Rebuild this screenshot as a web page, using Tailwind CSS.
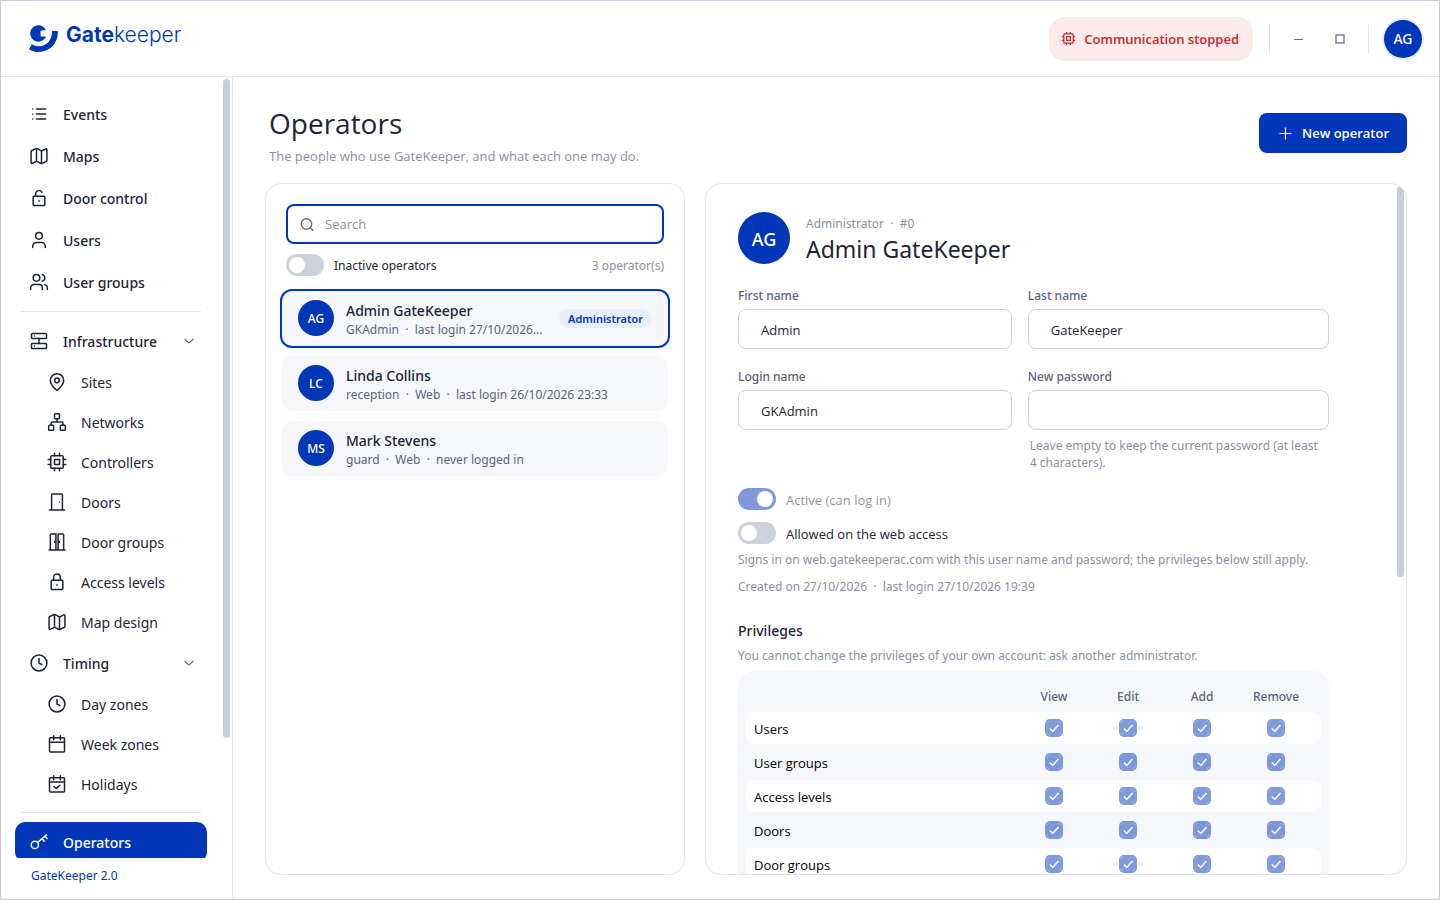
<!DOCTYPE html>
<html lang="en">
<head>
    <meta charset="UTF-8">
    <meta name="viewport" content="width=device-width, initial-scale=1.0">
    <title>GateKeeper - Operators</title>
    <script src="https://cdn.jsdelivr.net/npm/@tailwindcss/browser@4"></script>
</head>
<body class="h-screen overflow-hidden bg-white font-['Noto_Sans','Open_Sans',sans-serif] text-[13px] text-[#1f2436]">

    <!-- Icon set -->
    <svg class="hidden" xmlns="http://www.w3.org/2000/svg">
        <symbol id="i-list" viewBox="0 0 24 24"><path d="M9 6h11M9 12h11M9 18h11M4.500 6h.1M4.500 12h.1M4.500 18h.1"/></symbol>
        <symbol id="i-map" viewBox="0 0 24 24"><path d="M14.1 5.55a2 2 0 0 0 1.8 0l4.2-2.1A1 1 0 0 1 21.5 4.3v13.1a1 1 0 0 1-.55.9l-5.05 2.5a2 2 0 0 1-1.8 0l-4.2-2.1a2 2 0 0 0-1.8 0l-4.2 2.1A1 1 0 0 1 2.5 20V6.6a1 1 0 0 1 .55-.9L8.1 3.2a2 2 0 0 1 1.8 0zM15 5.8v15M9 3.2v15"/></symbol>
        <symbol id="i-unlock" viewBox="0 0 24 24"><rect x="5" y="10" width="14" height="11" rx="1"/><path d="M8 10V7a4 4 0 0 1 7.600-1.700M12 15.200v.8"/></symbol>
        <symbol id="i-lock" viewBox="0 0 24 24"><rect x="5" y="10" width="14" height="11" rx="1"/><path d="M8 10V6.500a4 4 0 0 1 8 0V10M12 15.200v.8"/></symbol>
        <symbol id="i-user" viewBox="0 0 24 24"><circle cx="12" cy="7" r="4"/><path d="M19.500 21v-1.500a4.500 4.500 0 0 0-4.500-4.500H9a4.500 4.500 0 0 0-4.500 4.500V21"/></symbol>
        <symbol id="i-users" viewBox="0 0 24 24"><circle cx="9" cy="7" r="4"/><path d="M16 21v-2a4 4 0 0 0-4-4H6a4 4 0 0 0-4 4v2M22 21v-2a4 4 0 0 0-3-3.870M16 3.130a4 4 0 0 1 0 7.750"/></symbol>
        <symbol id="i-server" viewBox="0 0 24 24"><rect x="3" y="3" width="18" height="6" rx="1"/><rect x="3" y="15" width="18" height="6" rx="1"/><path d="M6.500 6h.1M6.500 18h.1M12 9v6"/></symbol>
        <symbol id="i-pin" viewBox="0 0 24 24"><path d="M20 10c0 5-5.500 10.200-7.400 11.800a1 1 0 0 1-1.200 0C9.500 20.200 4 15 4 10a8 8 0 0 1 16 0"/><circle cx="12" cy="10" r="2.800"/></symbol>
        <symbol id="i-network" viewBox="0 0 24 24"><rect x="16" y="16" width="6" height="6" rx="1"/><rect x="2" y="16" width="6" height="6" rx="1"/><rect x="9" y="2" width="6" height="6" rx="1"/><path d="M5 16v-3a1 1 0 0 1 1-1h12a1 1 0 0 1 1 1v3M12 12V8"/></symbol>
        <symbol id="i-cpu" viewBox="0 0 24 24"><rect x="4.500" y="4.500" width="15" height="15" rx="1.500"/><rect x="9" y="9" width="6" height="6" rx=".5"/><path d="M9 1.500v3M15 1.500v3M9 19.500v3M15 19.500v3M1.500 9h3M1.500 15h3M19.500 9h3M19.500 15h3"/></symbol>
        <symbol id="i-door" viewBox="0 0 24 24"><path d="M5.500 21V3.500a1 1 0 0 1 1-1h11a1 1 0 0 1 1 1V21M3 21.500h18M15 12v.1"/></symbol>
        <symbol id="i-doors" viewBox="0 0 24 24"><path d="M4 21V3.500a1 1 0 0 1 1-1h5.700V21M13.300 21V2.500H19a1 1 0 0 1 1 1V21M2.500 21.500h19M9 11.500v.8M15 11.500v.8"/></symbol>
        <symbol id="i-clock" viewBox="0 0 24 24"><circle cx="12" cy="12" r="9.500"/><path d="M12 6.500V12l3.500 2"/></symbol>
        <symbol id="i-calendar" viewBox="0 0 24 24"><rect x="3" y="4.500" width="18" height="17" rx="1"/><path d="M8 2v5M16 2v5M3 10h18"/></symbol>
        <symbol id="i-calendar-check" viewBox="0 0 24 24"><rect x="3" y="4.500" width="18" height="17" rx="1"/><path d="M8 2v5M16 2v5M3 9.500h18M8.500 15l2.500 2.500 4.500-4"/></symbol>
        <symbol id="i-key" viewBox="0 0 24 24"><circle cx="7" cy="15.500" r="4.300"/><path d="M10.300 12.600L21 3.500M15.800 8l2.500 3M19.200 5l2.500 2.800"/></symbol>
        <symbol id="i-chevron" viewBox="0 0 24 24"><path d="M3 8l9 8 9-8"/></symbol>
    </svg>

    <div class="flex h-full flex-col border border-[#c9cddb]">

        <!-- Top bar -->
        <header class="flex h-[76px] shrink-0 items-center justify-between border-b border-[#e3e5ed] pr-[17px] pl-7">
            <a href="#" class="flex items-start gap-2 text-[#0037b8]">
                <svg class="h-7 w-[29px]" viewBox="0 0 29 28" fill="currentColor">
                    <path d="M17 5.300A8.200 8.200 0 1 0 17 11.600h-4a1.500 1.500 0 0 1-1.500-1.500v-3.300a1.500 1.500 0 0 1 1.500-1.500z"/>
                    <path d="M23 6h5.900c.4 12-7.600 21-19.100 21-3.700 0-6.900-.9-9.800-2.800l2.800-4.900c2.100 1.300 4.300 1.900 7 1.900 8.200 0 13.200-6.200 13.200-15.200z"/>
                </svg>
                <span class="font-[Inter] text-[21px] leading-5"><b class="font-bold">Gate</b><span class="font-light">keeper</span></span>
            </a>
            <div class="flex items-center">
                <div class="flex h-11 items-center gap-2 rounded-2xl bg-[#fcebeb] pr-[14px] pl-3 font-[Open_Sans] font-semibold text-[#c52828]">
                    <svg class="size-[15px] fill-none stroke-current stroke-2"><use href="#i-cpu"/></svg>
                    <span class="pt-[2px]">Communication stopped</span>
                </div>
                <div class="ml-4 h-[30px] w-px bg-[#e3e5ed]"></div>
                <button class="ml-[7px] flex h-8 w-[42px] items-center justify-center" aria-label="Minimize">
                    <svg class="size-3 fill-none stroke-[#686e82]" viewBox="0 0 12 12"><path d="M2 6.500h9"/></svg>
                </button>
                <button class="flex h-8 w-[42px] items-center justify-center" aria-label="Maximize">
                    <svg class="size-3 fill-none stroke-[#686e82]" viewBox="0 0 12 12"><rect x="2" y="2" width="8" height="8" stroke-width="1.300"/></svg>
                </button>
                <div class="ml-[7px] h-[30px] w-px bg-[#e3e5ed]"></div>
                <button class="ml-[15px] size-[38px] rounded-full bg-[#0037b8] pt-px text-sm font-medium text-white ring-2 ring-[#e8eefc]">AG</button>
            </div>
        </header>

        <div class="flex min-h-0 flex-1">

            <!-- Sidebar -->
            <aside class="flex w-[232px] shrink-0 flex-col border-r border-[#e3e5ed]">
                <div class="flex min-h-0 flex-1 justify-between">
                    <nav id="menu" class="ml-[14px] flex w-48 flex-col gap-[2px] overflow-hidden pt-[17px] text-sm"></nav>
                    <div class="mt-[2px] mr-[2px] h-[659px] w-[7px] rounded-full bg-[#c9cddb]"></div>
                </div>
                <a href="#" class="h-[41px] pl-[30px] text-xs leading-9 text-[#0037b8]">GateKeeper 2.0</a>
            </aside>

            <!-- Content -->
            <main class="flex min-w-0 flex-1 flex-col px-8 pb-6">
                <div class="flex h-[106px] shrink-0 items-start justify-between pt-[27px] font-[Open_Sans]">
                    <div class="pl-1">
                        <h1 class="text-[28px] leading-[38px]">Operators</h1>
                        <p class="leading-7 text-[#8b90a4]">The people who use GateKeeper, and what each one may do.</p>
                    </div>
                    <button class="mt-[9px] flex h-10 items-center gap-[10px] rounded-lg bg-[#0037b8] pr-[18px] pl-5 font-semibold text-white">
                        <svg class="size-[13px] fill-none stroke-current" viewBox="0 0 14 14"><path d="M7 .500v13M.500 7h13" stroke-width="1.300"/></svg>
                        <span class="pt-px">New operator</span>
                    </button>
                </div>

                <div class="flex min-h-0 flex-1 gap-5">

                    <!-- Operator list -->
                    <section class="w-[420px] shrink-0 rounded-2xl border border-[#e3e5ed] px-4 py-5">
                        <div class="px-1">
                            <label class="flex h-10 items-center gap-[10px] rounded-lg border-2 border-[#0037b8] px-3">
                                <svg class="size-[15px] shrink-0 fill-none stroke-[#686e82]" viewBox="0 0 15 15"><circle cx="6.500" cy="7" r="5.200" stroke-width="1.400"/><path d="M10.200 10.700l3 3" stroke-width="1.400"/></svg>
                                <input type="text" placeholder="Search" aria-label="Search" class="min-w-0 flex-1 pt-px font-[Open_Sans] outline-none placeholder:text-[#8b90a4]">
                            </label>
                            <div class="mt-[10px] flex h-[22px] items-center justify-between">
                                <label class="flex items-center gap-[10px] text-xs">
                                    <input type="checkbox" class="h-[22px] w-[38px] appearance-none rounded-full bg-[#cdd1dd] p-[3px] before:block before:size-4 before:rounded-full before:bg-white checked:bg-[#0037b8] checked:before:ml-4">
                                    <span class="pt-[2px]">Inactive operators</span>
                                </label>
                                <span class="pt-[2px] text-xs text-[#8b90a4]">3 operator(s)</span>
                            </div>
                        </div>
                        <div id="operators" class="mt-[15px] flex flex-col gap-[10px]"></div>
                    </section>

                    <!-- Operator card -->
                    <section class="flex min-w-0 flex-1 justify-between overflow-hidden rounded-2xl border border-[#e3e5ed]">
                        <div class="mr-[68px] ml-8 h-full min-w-0 flex-1 overflow-hidden pt-7">
                            <div class="flex h-[52px] items-center gap-4">
                                <div class="flex size-[52px] items-center justify-center rounded-full bg-[#0037b8] pt-px text-lg font-medium text-white">AG</div>
                                <div>
                                    <p class="text-xs leading-[22px] whitespace-pre text-[#8b90a4]">Administrator  ·  #0</p>
                                    <h2 class="text-[23px] leading-7">Admin GateKeeper</h2>
                                </div>
                            </div>

                            <form>
                                <div class="mt-[22px] grid grid-cols-[10fr_11fr] gap-x-4 gap-y-[18px]">
                                    <label class="flex flex-col gap-[3px] text-xs leading-5 font-medium text-[#5d647a]">First name
                                        <input type="text" value="Admin" class="h-10 w-full rounded-lg border border-[#cdd1e0] px-[22px] pt-px font-[Open_Sans] text-[13px] font-normal text-[#1f2436]">
                                    </label>
                                    <label class="flex flex-col gap-[3px] text-xs leading-5 font-medium text-[#5d647a]">Last name
                                        <input type="text" value="GateKeeper" class="h-10 w-full rounded-lg border border-[#cdd1e0] px-[22px] pt-px font-[Open_Sans] text-[13px] font-normal text-[#1f2436]">
                                    </label>
                                    <label class="flex flex-col gap-[3px] text-xs leading-5 font-medium text-[#5d647a]">Login name
                                        <input type="text" value="GKAdmin" class="h-10 w-full rounded-lg border border-[#cdd1e0] px-[22px] pt-px font-[Open_Sans] text-[13px] font-normal text-[#1f2436]">
                                    </label>
                                    <div>
                                        <label class="flex flex-col gap-[3px] text-xs leading-5 font-medium text-[#5d647a]">New password
                                            <input type="password" class="h-10 w-full rounded-lg border border-[#cdd1e0] px-[22px] pt-px font-[Open_Sans] text-[13px] font-normal text-[#1f2436]">
                                        </label>
                                        <p class="mt-[7px] pl-[2px] text-xs leading-[17px] text-[#8b90a4]">Leave empty to keep the current password (at least<br>4 characters).</p>
                                    </div>
                                </div>

                                <div class="mt-[17px] flex flex-col gap-3 font-[Open_Sans]">
                                    <label class="flex h-[22px] items-center gap-[10px] opacity-50">
                                        <input type="checkbox" checked disabled class="h-[22px] w-[38px] appearance-none rounded-full bg-[#cdd1dd] p-[3px] before:block before:size-4 before:rounded-full before:bg-white checked:bg-[#0037b8] checked:before:ml-4">
                                        <span class="pt-[3px]">Active (can log in)</span>
                                    </label>
                                    <label class="flex h-[22px] items-center gap-[10px]">
                                        <input type="checkbox" class="h-[22px] w-[38px] appearance-none rounded-full bg-[#cdd1dd] p-[3px] before:block before:size-4 before:rounded-full before:bg-white checked:bg-[#0037b8] checked:before:ml-4">
                                        <span class="pt-[3px]">Allowed on the web access</span>
                                    </label>
                                </div>
                                <p class="mt-[7px] text-xs leading-[18px] whitespace-nowrap text-[#8b90a4]">Signs in on web.gatekeeperac.com with this user name and password; the privileges below still apply.</p>
                                <p class="mt-[9px] text-xs leading-[18px] whitespace-pre text-[#8b90a4]">Created on 27/10/2026  ·  last login 27/10/2026 19:39</p>

                                <h3 class="mt-[25px] text-sm leading-5 font-medium">Privileges</h3>
                                <p class="mt-[6px] text-xs leading-[18px] text-[#8b90a4]">You cannot change the privileges of your own account: ask another administrator.</p>
                                <div class="mt-[6px] rounded-2xl bg-[#f5f7fb] px-2 pt-2 pb-6">
                                    <table class="w-full table-fixed border-separate border-spacing-x-0 border-spacing-y-[2px]">
                                        <thead>
                                            <tr class="h-[29px] text-xs text-[#5d647a]">
                                                <td></td>
                                                <th class="w-[74px] pt-[2px] font-medium">View</th>
                                                <th class="w-[74px] pt-[2px] font-medium">Edit</th>
                                                <th class="w-[74px] pt-[2px] font-medium">Add</th>
                                                <th class="w-[82px] pt-[2px] pr-2 font-medium">Remove</th>
                                            </tr>
                                        </thead>
                                        <tbody id="privileges" class="font-[Open_Sans]"></tbody>
                                    </table>
                                </div>
                            </form>
                        </div>
                        <div class="mt-[2px] mr-[2px] h-[391px] w-[7px] shrink-0 rounded-full bg-[#c9cddb]"></div>
                    </section>
                </div>
            </main>
        </div>
    </div>

    <script>
        // Sidebar entries; null draws a divider
        const menu = [
            { icon: "list", text: "Events" },
            { icon: "map", text: "Maps" },
            { icon: "unlock", text: "Door control" },
            { icon: "user", text: "Users" },
            { icon: "users", text: "User groups" },
            null,
            { icon: "server", text: "Infrastructure", open: true },
            { icon: "pin", text: "Sites", sub: true },
            { icon: "network", text: "Networks", sub: true },
            { icon: "cpu", text: "Controllers", sub: true },
            { icon: "door", text: "Doors", sub: true },
            { icon: "doors", text: "Door groups", sub: true },
            { icon: "lock", text: "Access levels", sub: true },
            { icon: "map", text: "Map design", sub: true },
            { icon: "clock", text: "Timing", open: true },
            { icon: "clock", text: "Day zones", sub: true },
            { icon: "calendar", text: "Week zones", sub: true },
            { icon: "calendar-check", text: "Holidays", sub: true },
            null,
            { icon: "key", text: "Operators", active: true }
        ];

        document.getElementById("menu").innerHTML = menu.map(item => {
            if (!item) return `<hr class="mx-[6px] my-[7px] shrink-0 border-[#e3e5ed]">`;
            let box = "h-10 pl-[14px] font-medium";
            if (item.sub) box = "h-[38px] pl-8";
            if (item.active) box = "h-10 rounded-[10px] bg-[#0037b8] pl-[14px] font-medium text-white";
            return `
                <a href="#" class="flex shrink-0 items-center gap-[14px] ${box}">
                    <svg class="size-5 fill-none stroke-current stroke-[1.8]" stroke-linecap="round" stroke-linejoin="round"><use href="#i-${item.icon}"/></svg>
                    <span class="flex-1 pt-px">${item.text}</span>
                    ${item.open ? `<svg class="mr-3 size-3 fill-none stroke-[#686e82] stroke-[2.4]"><use href="#i-chevron"/></svg>` : ""}
                </a>`;
        }).join("");

        const operators = [
            { initials: "AG", name: "Admin GateKeeper", info: "GKAdmin  ·  last login 27/10/2026...", badge: "Administrator" },
            { initials: "LC", name: "Linda Collins", info: "reception  ·  Web  ·  last login 26/10/2026 23:33" },
            { initials: "MS", name: "Mark Stevens", info: "guard  ·  Web  ·  never logged in" }
        ];

        document.getElementById("operators").innerHTML = operators.map((op, i) => `
            <button class="flex h-[55px] w-full items-center rounded-[10px] bg-[#f5f7fb] px-4 pb-px text-left ${i === 0 ? "ring-2 ring-[#0037b8]" : ""}">
                <span class="flex size-9 shrink-0 items-center justify-center rounded-full bg-[#0037b8] pt-[2px] text-xs font-medium text-white">${op.initials}</span>
                <span class="ml-3 block min-w-0 flex-1 pt-[3px]">
                    <span class="block text-sm leading-[19px] font-medium">${op.name}</span>
                    <span class="block text-xs leading-[19px] whitespace-pre text-[#5d647a]">${op.info}</span>
                </span>
                ${op.badge ? `<span class="rounded-full bg-[#e8eefc] px-[9px] text-[11px] leading-[19px] font-semibold text-[#0037b8]">${op.badge}</span>` : ""}
            </button>
        `).join("");

        const areas = ["Users", "User groups", "Access levels", "Doors", "Door groups"];
        const rights = ["View", "Edit", "Add", "Remove"];

        document.getElementById("privileges").innerHTML = areas.map(area => `
            <tr class="group h-8">
                <td class="rounded-l-lg pt-[3px] pl-2 text-black group-odd:bg-white">${area}</td>
                ${rights.map(right => `
                    <td class="group-odd:bg-white last:rounded-r-lg last:pr-2">
                        <span class="mx-auto grid size-[18px]">
                            <input type="checkbox" checked disabled aria-label="${area}: ${right}" class="col-start-1 row-start-1 size-[18px] appearance-none rounded-[5px] bg-[#0037b8]/50">
                            <svg class="pointer-events-none col-start-1 row-start-1 fill-none stroke-white" viewBox="0 0 18 18">
                                <path d="M4.800 9.500l3 3 5.700-6.500" stroke-width="1.500"/>
                                <path d="M2 4.500a2.500 2.500 0 0 1 2.500-2.500M13.500 2a2.500 2.500 0 0 1 2.500 2.500M16 13.500a2.500 2.500 0 0 1-2.500 2.500M4.500 16a2.500 2.500 0 0 1-2.500-2.500" stroke-opacity=".25"/>
                            </svg>
                        </span>
                    </td>`).join("")}
            </tr>
        `).join("");
    </script>
</body>
</html>
